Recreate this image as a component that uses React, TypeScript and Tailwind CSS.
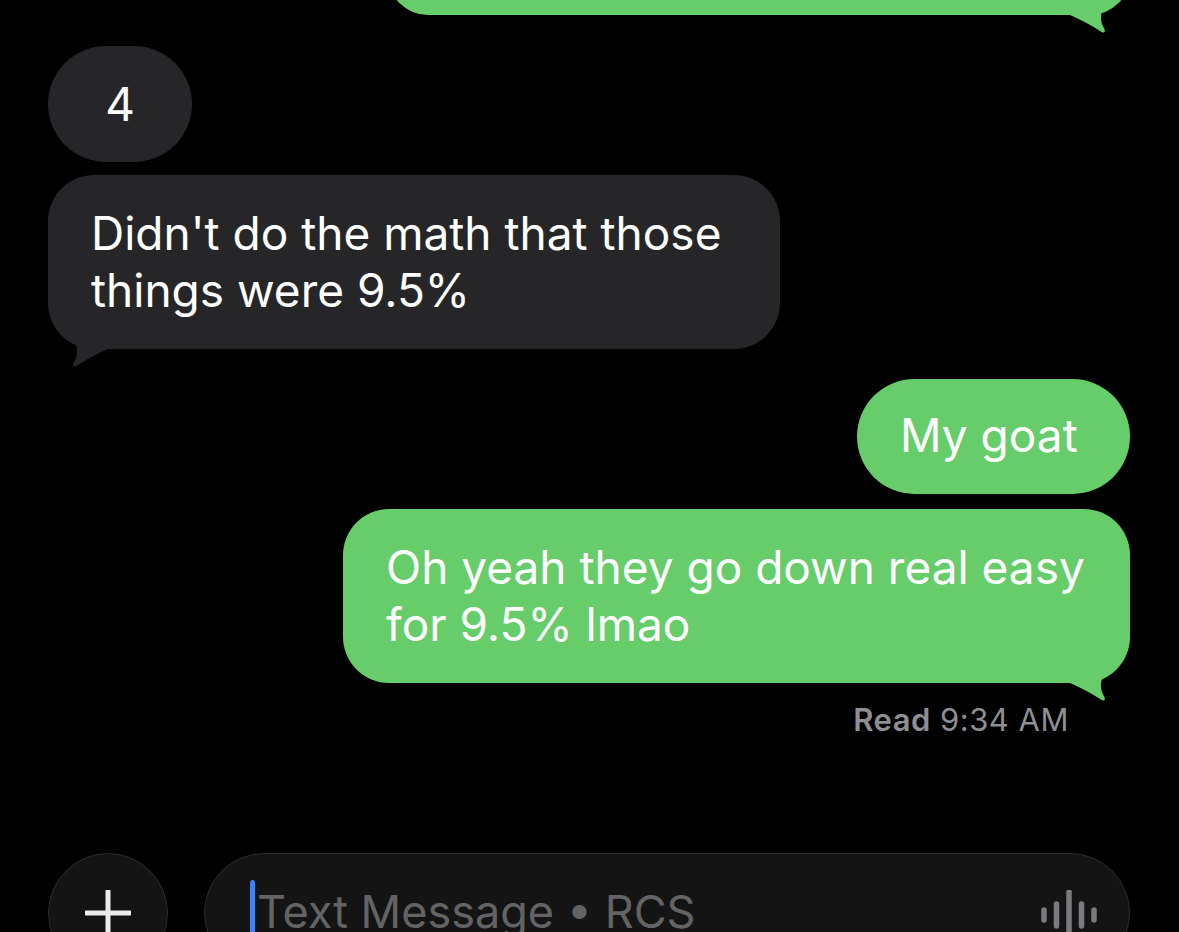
import React from 'react';

const GREEN = 'bg-[#67cd6a]';
const GREY = 'bg-[#262628]';

// Bubble tail drawn for the right-hand corner; mirrored for received messages
function Tail({ fill, side }: { fill: string; side: 'left' | 'right' }) {
  return (
    <svg
      width="70"
      height="72"
      viewBox="0 0 70 72"
      className={`absolute bottom-[-19px] ${side === 'right' ? 'right-0' : 'left-0 -scale-x-100'}`}
    >
      <path
        d="M0 53 L10 53 C22 58 32 64 40 69 Q46 73 44.5 67 C40 60 39 50 46 43 C60 32 70 20 70 0 L0 0 Z"
        fill={fill}
      />
    </svg>
  );
}

function Waveform() {
  const bars = [
    { x: 0, y1: 20, y2: 30 },
    { x: 12.5, y1: 14, y2: 36 },
    { x: 25, y1: 2, y2: 60 },
    { x: 37.5, y1: 14, y2: 36 },
    { x: 50, y1: 20, y2: 30 },
  ];
  return (
    <svg width="56" height="50" viewBox="-3 0 56 50" className="shrink-0">
      {bars.map((b) => (
        <line
          key={b.x}
          x1={b.x}
          x2={b.x}
          y1={b.y1}
          y2={b.y2}
          stroke="#7b7b7d"
          strokeWidth="5.5"
          strokeLinecap="round"
        />
      ))}
    </svg>
  );
}

export default function App() {
  return (
    <div
      className="w-[1179px] h-[932px] overflow-hidden bg-black text-white flex flex-col pl-[48px] pr-[49px]"
      style={{ fontFamily: 'Inter, "Noto Sans", sans-serif' }}
    >
      {/* previous sent message, scrolled mostly out of view */}
      <div className={`relative shrink-0 self-end w-[742px] h-[80px] mt-[-65px] rounded-[46px] ${GREEN}`}>
        <Tail fill="#67cd6a" side="right" />
      </div>

      <div className={`shrink-0 mt-[31px] w-[144px] h-[116px] rounded-full ${GREY} flex items-center justify-center text-[46px] leading-[57px]`}>
        4
      </div>

      <div className={`relative shrink-0 mt-[13px] w-[732px] h-[174px] rounded-[46px] ${GREY} pl-[43px] pt-[30px] text-[46px] leading-[57px] whitespace-nowrap`}>
        <Tail fill="#262628" side="left" />
        <div className="relative">
          Didn't do the math that those
          <br />
          things were 9.5%
        </div>
      </div>

      <div className={`shrink-0 self-end mt-[30px] w-[273px] h-[115px] rounded-full ${GREEN} pl-[43px] pt-[28px] text-[46px] leading-[57px] whitespace-nowrap`}>
        My goat
      </div>

      <div className={`relative shrink-0 self-end mt-[15px] w-[787px] h-[174px] rounded-[46px] ${GREEN} pl-[43px] pt-[30px] text-[46px] leading-[57px] whitespace-nowrap`}>
        <Tail fill="#67cd6a" side="right" />
        <div className="relative">
          Oh yeah they go down real easy
          <br />
          for 9.5% lmao
        </div>
      </div>

      <div className="shrink-0 self-end mt-[19px] mr-[61px] text-[31px] leading-[36px] tracking-[0.5px] text-[#8e8e93]">
        <span className="font-semibold">Read</span> 9:34 AM
      </div>

      {/* compose bar */}
      <div className="shrink-0 mt-[115px] flex gap-[36px]">
        <div className="w-[120px] h-[120px] shrink-0 rounded-full bg-[#141414] border border-[#2c2c2e] flex items-center justify-center">
          <svg width="46" height="46" viewBox="0 0 46 46">
            <path d="M23 1 V45 M1 23 H45" stroke="#ececec" strokeWidth="5" strokeLinecap="round" />
          </svg>
        </div>
        <div className="flex-1 h-[120px] rounded-[60px] bg-[#141414] border border-[#2c2c2e] flex items-start pl-[45px] pr-[32px] pt-[26px]">
          <div className="w-[5px] h-[60px] rounded-full bg-[#3a84f7] shrink-0" />
          <div className="flex-1 pl-[2px] pt-[3px] text-[45px] leading-[57px] text-[#636366] whitespace-nowrap">
            Text Message • RCS
          </div>
          <div className="pt-[10px]">
            <Waveform />
          </div>
        </div>
      </div>
    </div>
  );
}
